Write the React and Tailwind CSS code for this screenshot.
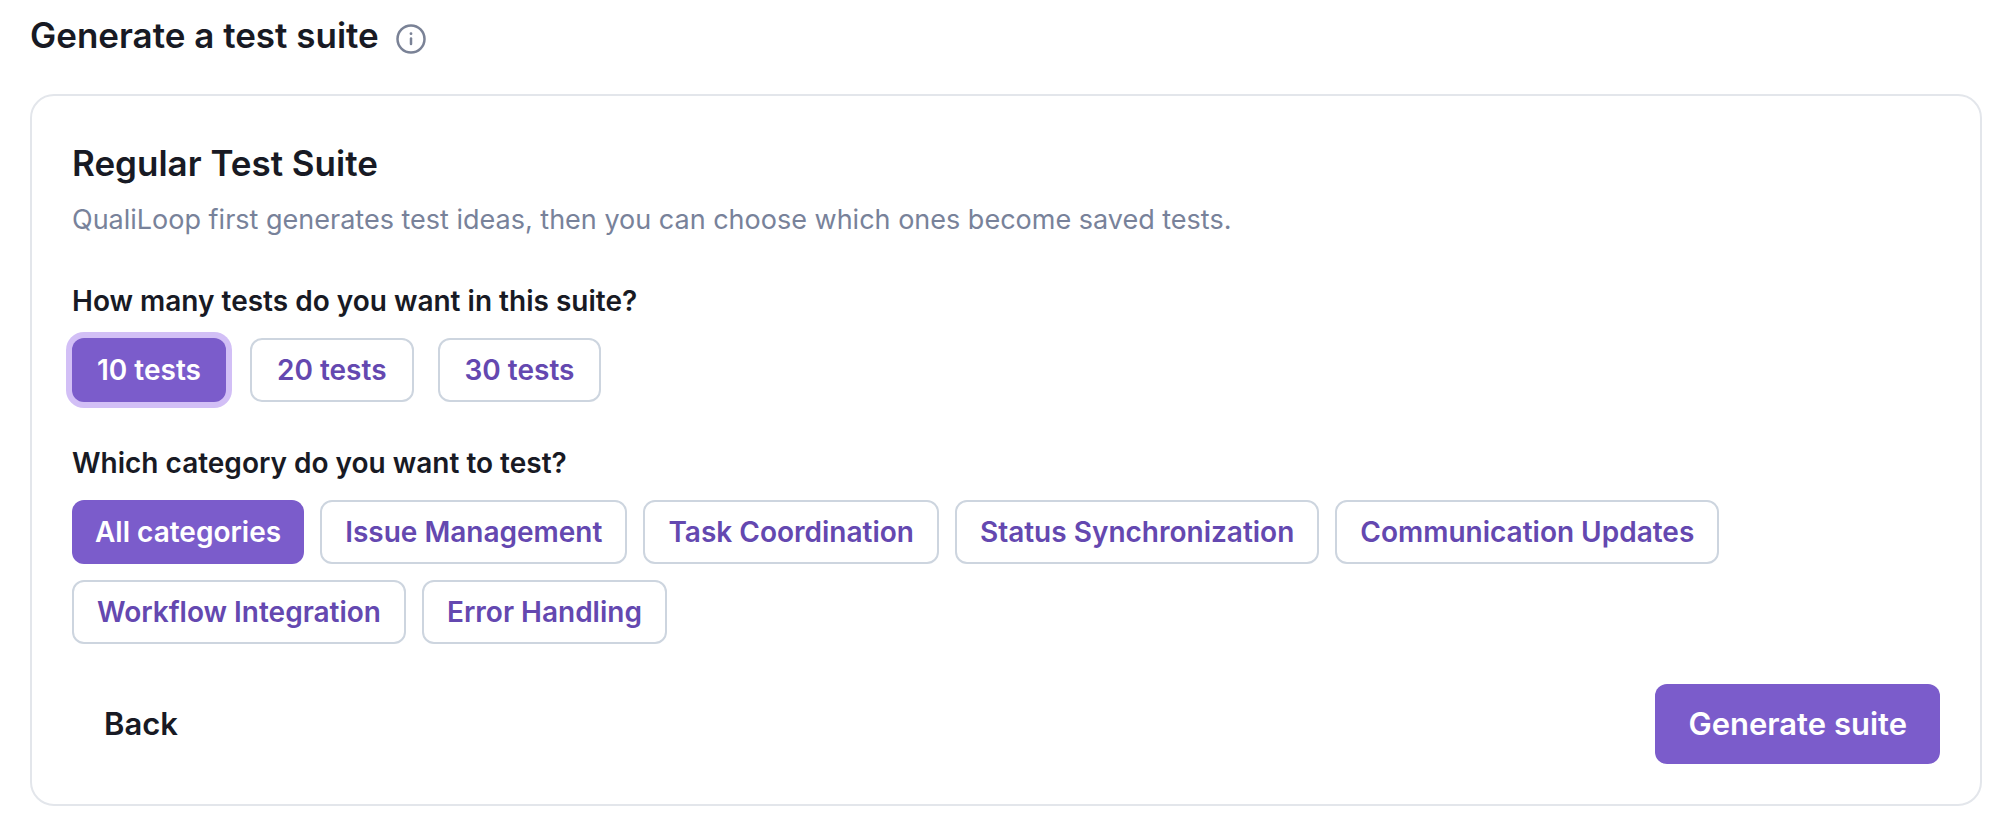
import React, { useState } from 'react';

const COUNTS = [10, 20, 30];

const CATEGORIES = [
  'All categories',
  'Issue Management',
  'Task Coordination',
  'Status Synchronization',
  'Communication Updates',
  'Workflow Integration',
  'Error Handling',
];

function OptionButton({ selected, highlighted, padding = 'px-[23px]', onClick, children }) {
  return (
    <button
      type="button"
      aria-pressed={selected}
      onClick={onClick}
      className={`h-16 rounded-xl text-[28px] leading-8 font-semibold whitespace-nowrap ${padding} ${
        selected ? 'bg-[#7b5ccb] text-white' : 'border-2 border-[#cdd5df] text-[#6448b0]'
      } ${highlighted ? 'ring-6 ring-[#d2bff6]' : ''}`}
    >
      {children}
    </button>
  );
}

export default function App() {
  const [count, setCount] = useState(10);
  const [category, setCategory] = useState('All categories');

  return (
    <main className="bg-white pt-[11px] pr-7 pb-8 pl-[30px] font-['Inter',sans-serif] text-[#181a24]">
      {/* Page title */}
      <header className="mb-[35px] flex h-12 items-center gap-4">
        <h1 className="text-[35px] leading-12 font-semibold">Generate a test suite</h1>
        <button type="button" aria-label="About test suites" className="mt-2 text-[#7a8296]">
          <svg width="32" height="32" viewBox="0 0 32 32" fill="none" stroke="currentColor" strokeWidth="2.5">
            <circle cx="16" cy="16" r="13.5" />
            <path d="M16 15.5v5.5" strokeLinecap="round" />
            <circle cx="16" cy="10.7" r="1.4" fill="currentColor" stroke="none" />
          </svg>
        </button>
      </header>

      <section className="rounded-3xl border-2 border-[#e3e6eb] p-10">
        <h2 className="text-[35px] leading-[54px] font-semibold">Regular Test Suite</h2>
        <p className="mt-2.5 text-[27px] leading-10 text-[#78829a]">
          QualiLoop first generates test ideas, then you can choose which ones become saved tests.
        </p>

        {/* Suite size */}
        <h3 id="count-label" className="mt-10 text-[28px] leading-[42px] font-semibold">
          How many tests do you want in this suite?
        </h3>
        <div role="group" aria-labelledby="count-label" className="mt-4 flex flex-wrap gap-6">
          {COUNTS.map((n) => (
            <OptionButton
              key={n}
              padding="px-[25px]"
              selected={count === n}
              highlighted={count === n}
              onClick={() => setCount(n)}
            >
              {n} tests
            </OptionButton>
          ))}
        </div>

        {/* Category */}
        <h3 id="category-label" className="mt-10 text-[28px] leading-[42px] font-semibold">
          Which category do you want to test?
        </h3>
        <div role="group" aria-labelledby="category-label" className="mt-4 flex flex-wrap gap-4">
          {CATEGORIES.map((name) => (
            <OptionButton key={name} selected={category === name} onClick={() => setCategory(name)}>
              {name}
            </OptionButton>
          ))}
        </div>

        <div className="mt-10 flex items-center justify-between">
          <button type="button" className="h-20 rounded-xl px-8 text-[31px] leading-10 font-semibold">
            Back
          </button>
          <button type="button" className="h-20 rounded-xl bg-[#7b5ccb] px-[33px] text-[31px] leading-10 font-semibold text-white">
            Generate suite
          </button>
        </div>
      </section>
    </main>
  );
}
